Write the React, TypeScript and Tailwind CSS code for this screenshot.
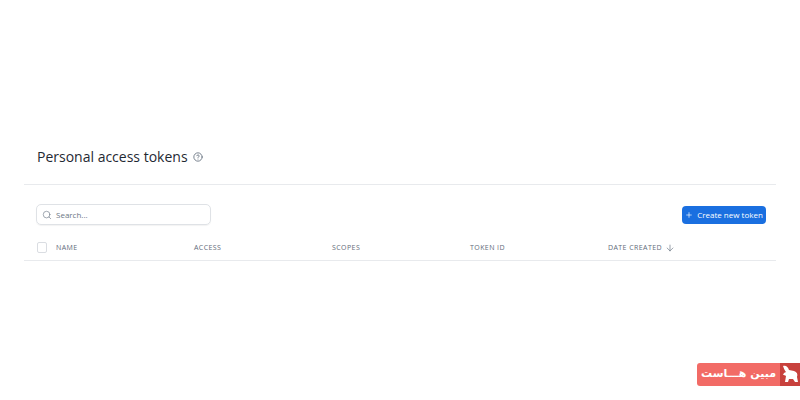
import React from 'react';
import { ArrowDown, CircleHelp, Plus, Search } from 'lucide-react';

const columns = ['NAME', 'ACCESS', 'SCOPES', 'TOKEN ID'];

const HostBadge: React.FC = () => (
    <div className="absolute right-0 top-[363px] flex h-[23px] w-[103px] overflow-hidden rounded-l-[3px] bg-[#f26b66]">
        <div
            dir="rtl"
            className="flex-1 whitespace-nowrap text-center font-['DejaVu_Sans',sans-serif] text-[11px] font-bold leading-[22px] text-white"
        >
            مبین هـــاست
        </div>
        <div className="flex w-[20px] items-center justify-center bg-[#c8413d]">
            <svg viewBox="0 0 20 23" className="h-[23px] w-[20px]" fill="#ffffff">
                <path d="M3 3c3-1 5 1 6 4l5 1c3 1 4 3 3 6l1 5h-3l-2-3H9l-1 3H5l1-6c-1-1-2-1-3-1l1-2 2-1C5 8 4 6 3 3z" />
            </svg>
        </div>
    </div>
);

const App: React.FC = () => {
    return (
        <div className="relative h-[400px] w-[800px] overflow-hidden bg-white font-['Open_Sans',sans-serif]">
            <div className="px-[24px] pt-[133px]">
                {/* Title */}
                <div className="flex h-[52px] items-start border-b border-[#e8eaed] px-[13px] pt-[13px]">
                    <h1 className="text-[14px] font-medium leading-[22px] text-[#1f2933]">Personal access tokens</h1>
                    <CircleHelp className="ml-[5px] mt-[6px] h-[10px] w-[10px] text-[#5f6b7a]" strokeWidth={2} />
                </div>

                {/* Toolbar */}
                <div className="flex items-center justify-between pl-[12px] pr-[10px] pt-[19px]">
                    <div className="flex h-[21px] w-[175px] items-center gap-[4px] rounded-[5px] border border-[#dfe2e6] pl-[5px] shadow-[0_1px_1px_rgba(0,0,0,0.05)]">
                        <Search className="h-[10px] w-[10px] text-[#6b7785]" strokeWidth={1.5} />
                        <span className="text-[8px] text-[#6b7785]">Search...</span>
                    </div>
                    <button
                        type="button"
                        className="flex h-[18px] w-[84px] items-center justify-center gap-[4px] rounded-[4px] bg-[#1a6fe0] text-[8px] font-medium text-white"
                    >
                        <Plus className="h-[8px] w-[8px]" strokeWidth={2} />
                        Create new token
                    </button>
                </div>

                {/* Table header */}
                <div className="mt-[9px] flex h-[27px] items-center border-b border-[#e8eaed] pl-[13px]">
                    <div className="h-[11px] w-[10px] rounded-[2px] border border-[#dadde2]" />
                    <div className="ml-[9px] mt-[2px] grid grid-cols-[138px_138px_138px_138px_auto] text-[7px] font-medium tracking-[0.06em] text-[#5f6b7a]">
                        {columns.map((col) => (
                            <span key={col}>{col}</span>
                        ))}
                        <span className="flex items-center gap-[3px]">
                            DATE CREATED
                            <ArrowDown className="h-[10px] w-[10px] text-[#5f6b7a]" strokeWidth={1.5} />
                        </span>
                    </div>
                </div>
            </div>

            <HostBadge />
        </div>
    );
};

export default App;
